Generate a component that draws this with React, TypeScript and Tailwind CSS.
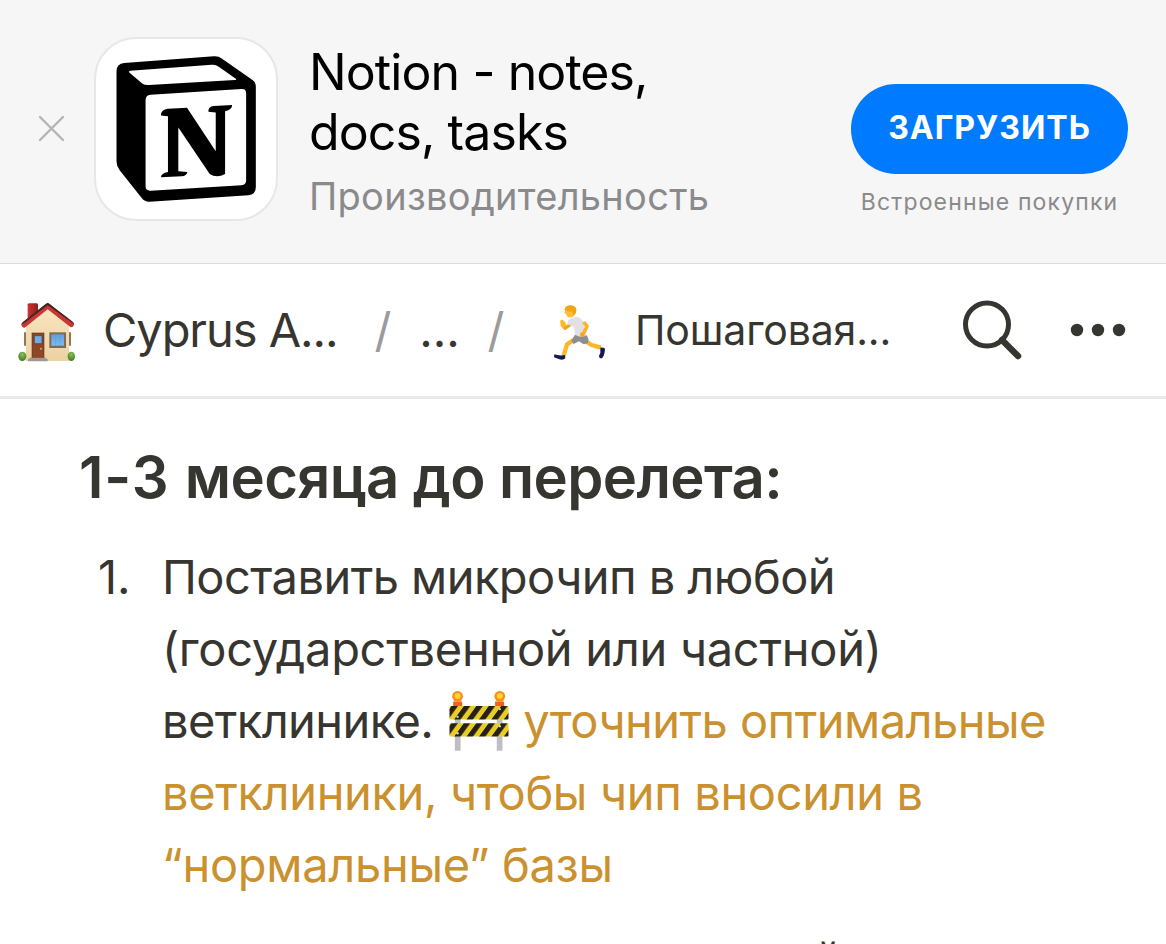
import React from 'react'

const bodyLines = [
  { text: 'Поставить микрочип в любой', className: 'tracking-[-0.56px]' },
  { text: '(государственной или частной)', className: 'tracking-[-0.29px]' },
]

const warningLines = [
  { text: 'ветклиники, чтобы чип вносили в', className: 'tracking-[-0.37px]' },
  { text: '“нормальные” базы', className: 'tracking-[-0.3px]' },
]

function NotionLogo() {
  return (
    <svg viewBox="288 108 418 437" className="h-[146px] w-[140px]">
      <path
        d="M312 129 L580 109 Q594 108 605 116 L696 180 Q706 187 706 199 V500 Q706 523 684 525 L388 544 Q374 545 365 534 L299 451 Q289 438 289 424 V154 Q289 131 312 129Z"
        fill="#000"
      />
      <path
        d="M330 152 L574 134 Q586 133 595 140 L645 175 Q650 179 643 180 L386 195 Q374 196 366 190 L328 158 Q324 153 330 152Z"
        fill="#fff"
      />
      <path
        d="M391 224 L663 207 Q677 206 677 220 V480 Q677 493 663 495 L391 511 Q376 512 376 498 V240 Q376 225 391 224Z"
        fill="#fff"
      />
      <path
        d="M443 266 L500 263 L586 393 V277 L564 275 Q563 260 580 258 L635 255 Q636 269 614 273 V461 Q589 475 568 461 L474 322 V453 L501 455 Q499 467 484 468 L422 471 Q422 459 443 455 V288 L422 286 Q422 268 443 266Z"
        fill="#000"
      />
    </svg>
  )
}

function HouseEmoji() {
  return (
    <svg viewBox="0 0 228 228" className="mt-[6px] size-[76px] shrink-0">
      <defs>
        <linearGradient id="wall" x1="0" y1="0" x2="0" y2="1">
          <stop offset="0" stopColor="#f8e5c0" />
          <stop offset="1" stopColor="#ecd2a2" />
        </linearGradient>
        <linearGradient id="chimney" x1="0" y1="0" x2="1" y2="0">
          <stop offset="0" stopColor="#d0312f" />
          <stop offset="1" stopColor="#8c1f1f" />
        </linearGradient>
        <linearGradient id="glass" x1="0" y1="0" x2="0" y2="1">
          <stop offset="0" stopColor="#5f9fdc" />
          <stop offset="1" stopColor="#7ebcf0" />
        </linearGradient>
        <radialGradient id="bush" cx="0.5" cy="0.3" r="0.7">
          <stop offset="0" stopColor="#8cc152" />
          <stop offset="1" stopColor="#3f7a26" />
        </radialGradient>
      </defs>
      <path d="M53 28 Q54 25 58 25 H79 Q84 25 84 29 V62 L53 84Z" fill="url(#chimney)" />
      <path d="M42 112h6v40h-6zM177 112h6v40h-6z" fill="#9a7355" />
      <path d="M48 92 L113 36 L177 92 V198 H48Z" fill="url(#wall)" />
      <ellipse cx="37" cy="184" rx="12" ry="14" fill="url(#bush)" />
      <ellipse cx="184" cy="184" rx="11" ry="14" fill="url(#bush)" />
      <path d="M34 86 L106 28 Q113 22 120 28 L192 86 L183 94 L113 38 L43 94Z" fill="#4b2d25" />
      <path d="M34 87 L113 29 L192 87 Q193 96 182 97 L113 43 L44 98 Q34 98 34 87Z" fill="#cc3536" />
      <path d="M100 33 L113 23 L126 33 L170 66 L190 82 L192 87 L113 31 L40 86 L36 83Z" fill="#3e2924" />
      <path d="M65 113h38v77h-38z" fill="#754229" />
      <path d="M69 117h30v70h-30z" fill="#8e4528" />
      <path d="M73 122h23v24h-23z" fill="#6cafe8" stroke="#5e3626" strokeWidth="2" />
      <circle cx="93" cy="161" r="3" fill="#e0b23c" />
      <path d="M118 112h50v47h-50z" fill="#806b52" />
      <path d="M124 118h38v34h-38z" fill="url(#glass)" />
      <path d="M137 118v34M150 118v34" stroke="#5f9bd0" strokeWidth="1.5" />
      <path d="M58 188h51v4h4v7H54v-7h4z" fill="#a39890" />
    </svg>
  )
}

function RunnerEmoji() {
  return (
    <svg viewBox="0 0 228 228" className="mt-[6px] size-[76px] shrink-0">
      <path d="M54 92 L60 100 L82 84" fill="none" stroke="#f0a51f" strokeWidth="10" strokeLinejoin="round" />
      <path d="M46 79 Q46 73 52 74 L60 82 L64 91 L55 100 L47 94Z" fill="#fcb827" />
      <path d="M90 132 L66 148 L56 181" fill="none" stroke="#fcb72b" strokeWidth="13" strokeLinejoin="round" />
      <path d="M118 136 L140 150 L168 158" fill="none" stroke="#fdb52a" strokeWidth="13" strokeLinejoin="round" />
      <path d="M90 119 L124 120 Q134 132 129 145 L116 148 L102 139 L86 147 L79 137Z" fill="#8d8d94" />
      <path d="M74 73 Q88 63 104 68 L120 84 L116 96 L122 122 Q104 129 91 119 L86 95 L68 88 Q66 79 74 73Z" fill="#e0e0e5" />
      <path d="M116 81 L126 94 L115 117" fill="none" stroke="#fbb32a" strokeWidth="11" strokeLinejoin="round" />
      <circle cx="112" cy="119" r="7" fill="#f5a41f" />
      <path d="M62 37 Q77 28 91 36 Q99 48 87 62 Q82 69 73 67 Q64 66 65 59 L59 54Z" fill="#fdbd35" />
      <path d="M58 44 Q62 31 76 31 Q94 32 94 47 Q93 57 85 61 L81 49 Q69 51 58 44Z" fill="#eea616" />
      <path d="M28 178 Q43 183 60 180 L61 190 Q54 197 43 193 L27 187Z" fill="#151b50" />
      <path d="M166 158 Q180 156 180 163 Q179 181 171 190 Q162 191 162 182 L166 174Z" fill="#151b50" />
    </svg>
  )
}

function BarrierEmoji() {
  return (
    <svg viewBox="59 62 178 182" className="mb-[2px] inline-block h-[61px] w-[60px] align-middle">
      <defs>
        <pattern id="stripes" width="37" height="40" patternUnits="userSpaceOnUse" patternTransform="translate(66 110) skewX(-36)">
          <path d="M0 0h37v40H0z" fill="#e6cf22" />
          <path d="M0 0h19v40H0z" fill="#272018" />
        </pattern>
      </defs>
      <path d="M76 145h17v98H76zM201 145h17v98h-17z" fill="#bfbfc3" />
      <path d="M71 96h27v15H71zM196 96h27v15h-27z" fill="#f0601e" />
      <circle cx="84" cy="81" r="16" fill="#fb8b1c" />
      <circle cx="210" cy="81" r="16" fill="#fb8b1c" />
      <circle cx="84" cy="80" r="9" fill="#ffd72c" />
      <circle cx="210" cy="80" r="9" fill="#ffd72c" />
      <rect x="60" y="110" width="176" height="40" rx="3" fill="url(#stripes)" />
      <rect x="60" y="161" width="176" height="40" rx="3" fill="url(#stripes)" />
      <g fill="#d5d5d5">
        <circle cx="84" cy="142" r="3.5" />
        <circle cx="210" cy="119" r="3.5" />
        <circle cx="84" cy="191" r="3.5" />
        <circle cx="210" cy="170" r="3.5" />
      </g>
    </svg>
  )
}

function AppBanner() {
  return (
    <header className="flex h-[264px] items-start border-b border-[#dcdcdc] bg-[#f6f6f6]">
      <button className="mt-[115px] ml-[38px] shrink-0" aria-label="Закрыть">
        <svg viewBox="0 0 27 27" className="size-[27px]" fill="none" stroke="#b4b4b4" strokeWidth="2.4" strokeLinecap="round">
          <path d="M2 2l23 23M25 2L2 25" />
        </svg>
      </button>
      <div className="mt-[37px] ml-[29px] flex h-[184px] w-[184px] shrink-0 items-start rounded-[42px] border-2 border-[#e7e7e7] bg-white pt-[17px] pl-[20px]">
        <NotionLogo />
      </div>
      <div className="mt-[42px] ml-[31px] w-[542px] shrink-0 whitespace-nowrap">
        <div className="text-[50px] leading-[60px] tracking-[-0.9px] text-black">
          <div>Notion - notes,</div>
          <div>docs, tasks</div>
        </div>
        <div className="mt-[10px] text-[38px] leading-[48px] tracking-[0.3px] text-[#8a8a8c]">Производительность</div>
      </div>
      <div className="mt-[84px] flex w-[277px] shrink-0 flex-col items-center whitespace-nowrap">
        <button className="h-[90px] w-full rounded-full bg-[#007aff] pb-[2px] text-[32px] font-bold tracking-[1px] text-white">
          ЗАГРУЗИТЬ
        </button>
        <div className="mt-[12px] text-[23px] leading-[32px] tracking-[1.15px] text-[#8a8a8c]">Встроенные покупки</div>
      </div>
    </header>
  )
}

function Breadcrumbs() {
  return (
    <nav className="flex h-[135px] items-center border-b-3 border-[#e9e9e9] pl-[10px] whitespace-nowrap">
      <HouseEmoji />
      <span className="ml-[17px] w-[265px] shrink-0 text-[47px] tracking-[-1.05px]">Cyprus A...</span>
      <span className="w-[30px] shrink-0 text-center text-[47px] text-[#9b9b9b]">/</span>
      <span className="w-[83px] shrink-0 text-center text-[47px]">...</span>
      <span className="w-[30px] shrink-0 text-center text-[47px] text-[#9b9b9b]">/</span>
      <span className="ml-[34px] flex shrink-0">
        <RunnerEmoji />
      </span>
      <span className="mt-[2px] ml-[14px] w-[327px] shrink-0 text-[41px] tracking-[-0.15px]">Пошаговая...</span>
      <svg viewBox="0 0 60 60" className="size-[60px] shrink-0" fill="none" stroke="#373530">
        <circle cx="25" cy="24.5" r="21.5" strokeWidth="5" />
        <path d="M40 40l16 16" strokeWidth="6.5" strokeLinecap="round" />
      </svg>
      <svg viewBox="0 0 56 14" className="ml-[48px] h-[14px] w-[56px] shrink-0" fill="#373530">
        <circle cx="7" cy="7" r="6.2" />
        <circle cx="28" cy="7" r="6.2" />
        <circle cx="49" cy="7" r="6.2" />
      </svg>
    </nav>
  )
}

export default function App() {
  return (
    <div className="h-[944px] w-[1166px] overflow-hidden bg-white font-['Inter','Liberation_Sans',sans-serif] text-[#373530]">
      <AppBanner />
      <Breadcrumbs />
      <main className="pt-[40px] pl-[79px] whitespace-nowrap">
        <h1 className="text-[58px] leading-[76px] font-semibold tracking-[-0.6px]">
          <span className="tracking-[0.8px]">1-3 </span>
          месяца до перелета:
        </h1>
        <ol className="mt-[26px] text-[47px] leading-[72px]">
          <li className="flex">
            <span className="w-[83px] shrink-0 pl-[19px]">1.</span>
            <div>
              {bodyLines.map((line) => (
                <div key={line.text} className={line.className}>
                  {line.text}
                </div>
              ))}
              <div className="flex h-[72px] items-center">
                <span className="tracking-[-0.6px]">ветклинике.</span>
                <span className="ml-[16px] flex">
                  <BarrierEmoji />
                </span>
                <span className="ml-[14px] tracking-[-0.55px] text-[#cb912f]">уточнить оптимальные</span>
              </div>
              {warningLines.map((line) => (
                <div key={line.text} className={`text-[#cb912f] ${line.className}`}>
                  {line.text}
                </div>
              ))}
            </div>
          </li>
          <li className="mt-[24px] flex">
            <span className="w-[83px] shrink-0 pl-[19px]">2.</span>
            <div className="tracking-[-0.73px]">вакцинировать питомца такой</div>
          </li>
        </ol>
      </main>
    </div>
  )
}
